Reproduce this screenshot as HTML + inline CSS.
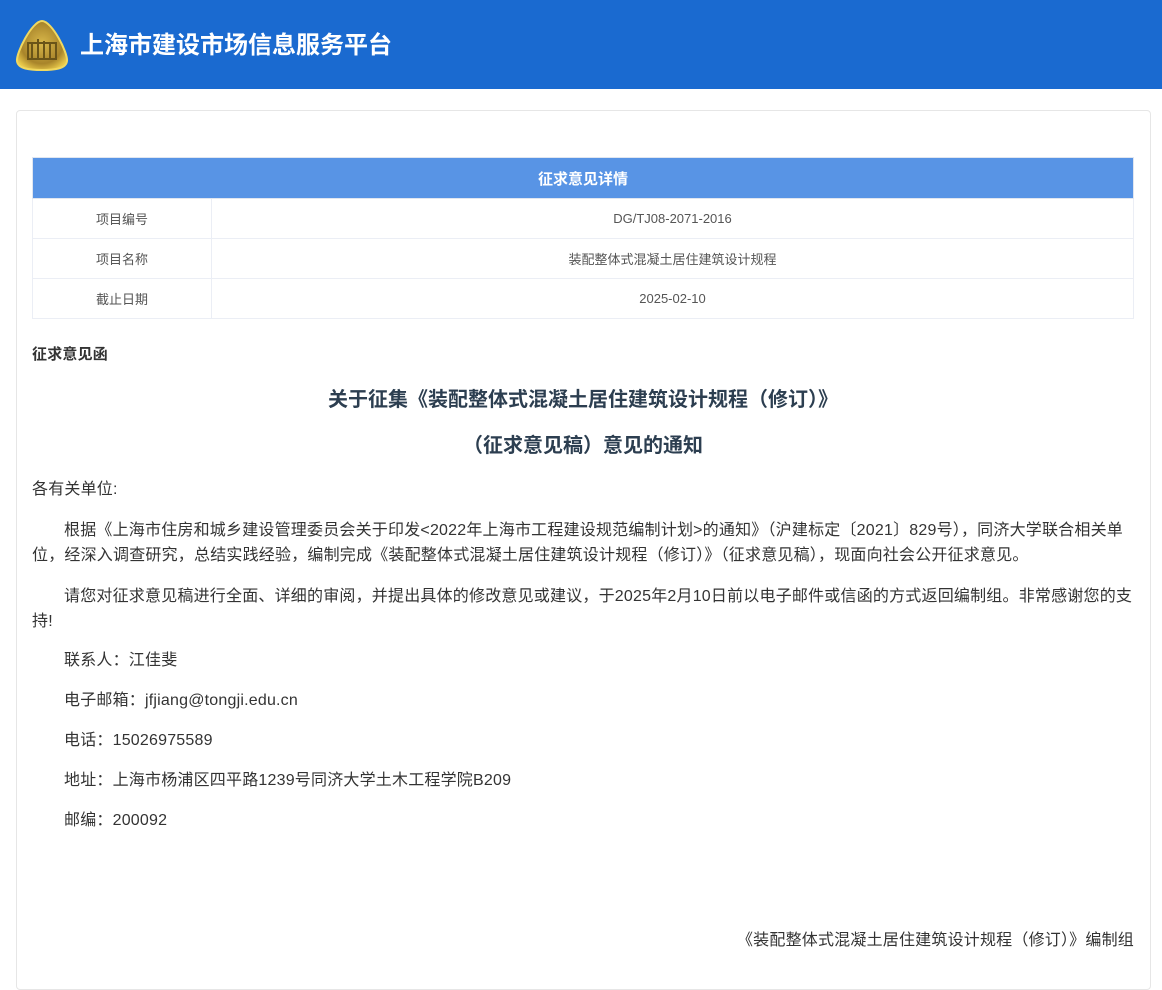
<!DOCTYPE html>
<html><head><meta charset="utf-8">
<style>
*{margin:0;padding:0;box-sizing:border-box}
body{width:1162px;height:961px;overflow:hidden;background:#fff;font-family:"Liberation Sans","Noto Sans CJK SC",sans-serif;color:#333;position:relative}
.hdr{position:absolute;left:0;top:0;width:1162px;height:89px;background:#1a6ad0}
.hdr .t{position:absolute;left:80px;top:30px;font-size:24px;font-weight:bold;color:#fff;line-height:32px}
.card{position:absolute;left:16px;top:110px;width:1135px;height:880px;border:1px solid #e6e6e6;border-radius:4px}
table{position:absolute;left:32px;top:157px;width:1102px;border-collapse:collapse;font-size:13px;color:#555}
th{background:#5894e5;color:#fff;height:41px;font-size:15px;font-weight:bold;border:1px solid #e0e6f0}
td{height:40px;border:1px solid #ebeef5;text-align:center}
td.l{width:179px}
.p{position:absolute;left:32px;width:1102px;font-size:16px;line-height:25px;color:#333;letter-spacing:0.2px}
.c{text-align:center;font-size:20px;font-weight:bold;color:#2c3e50;letter-spacing:0}
.in{text-indent:32px}
</style></head><body>
<div class="hdr">
<svg style="position:absolute;left:14px;top:19px" width="56" height="52" viewBox="0 0 56 52">
<defs><radialGradient id="g" cx="50%" cy="45%" r="60%"><stop offset="0" stop-color="#d8b74a"/><stop offset=".7" stop-color="#a8842a"/><stop offset="1" stop-color="#e8c84a"/></radialGradient></defs>
<path d="M28 2 C38 2 54 34 53 42 C52 50 40 51 28 51 C16 51 4 50 3 42 C2 34 18 2 28 2Z" fill="url(#g)" stroke="#f0d860" stroke-width="2"/>
<rect x="14" y="24" width="28" height="16" fill="none" stroke="#6a5418" stroke-width="2"/>
<path d="M18 24v16M24 20v20M30 22v18M36 24v16" stroke="#6a5418" stroke-width="2"/>
</svg>
<div class="t">上海市建设市场信息服务平台</div>
</div>
<div class="card"></div>
<table>
<tr><th colspan="2">征求意见详情</th></tr>
<tr><td class="l">项目编号</td><td>DG/TJ08-2071-2016</td></tr>
<tr><td class="l">项目名称</td><td>装配整体式混凝土居住建筑设计规程</td></tr>
<tr><td class="l">截止日期</td><td>2025-02-10</td></tr>
</table>
<div class="p" style="top:342px;font-weight:bold;font-size:15px">征求意见函</div>
<div class="p c" style="top:388px">关于征集《装配整体式混凝土居住建筑设计规程（修订）》</div>
<div class="p c" style="top:434px">（征求意见稿）意见的通知</div>
<div class="p" style="top:477px">各有关单位:</div>
<div class="p in" style="top:518px">根据《上海市住房和城乡建设管理委员会关于印发&lt;2022年上海市工程建设规范编制计划&gt;的通知》（沪建标定〔2021〕829号），同济大学联合相关单位，经深入调查研究，总结实践经验，编制完成《装配整体式混凝土居住建筑设计规程（修订）》（征求意见稿），现面向社会公开征求意见。</div>
<div class="p in" style="top:584px">请您对征求意见稿进行全面、详细的审阅，并提出具体的修改意见或建议，于2025年2月10日前以电子邮件或信函的方式返回编制组。非常感谢您的支持!</div>
<div class="p in" style="top:648px">联系人：江佳斐</div>
<div class="p in" style="top:688px">电子邮箱：jfjiang@tongji.edu.cn</div>
<div class="p in" style="top:728px">电话：15026975589</div>
<div class="p in" style="top:768px">地址：上海市杨浦区四平路1239号同济大学土木工程学院B209</div>
<div class="p in" style="top:808px">邮编：200092</div>
<div class="p" style="top:928px;text-align:right">《装配整体式混凝土居住建筑设计规程（修订）》编制组</div>
</body></html>
